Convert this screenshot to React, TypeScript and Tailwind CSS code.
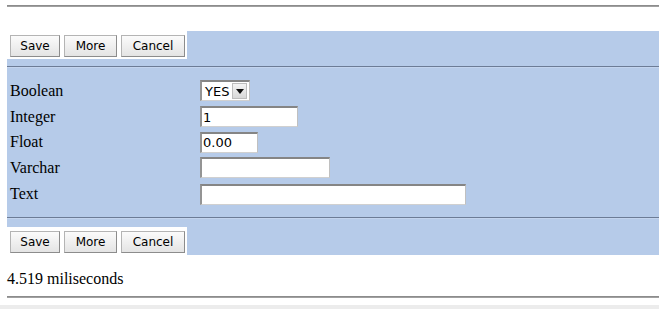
import React from "react";

function Btn({ label, w }: { label: string; w: string }) {
  return (
    <div
      className={`${w} h-[22px] flex items-center justify-center bg-gradient-to-b from-[#fbfbfb] to-[#e4e4e4] border border-[#b4b4b4] border-r-[#8c8c8c] border-b-[#8c8c8c] text-[12px] text-black leading-none`}
      style={{ fontFamily: '"DejaVu Sans", sans-serif' }}
    >
      {label}
    </div>
  );
}

function ButtonBar() {
  return (
    <div className="w-[180px] h-[28px] bg-white flex items-start gap-[4px] pl-[3px] pt-[4px]">
      <Btn label="Save" w="w-[50px]" />
      <Btn label="More" w="w-[53px]" />
      <Btn label="Cancel" w="w-[64px]" />
    </div>
  );
}

function Field({ w, value }: { w: string; value?: string }) {
  return (
    <div
      className={`${w} h-[21px] bg-white border-t-2 border-l-2 border-r border-b border-t-[#858585] border-l-[#949494] border-r-[#c0c0c0] border-b-[#d0d0d0] flex items-center pl-[1px] text-[13px] text-black leading-none`}
      style={{ fontFamily: '"DejaVu Sans", sans-serif' }}
    >
      {value}
    </div>
  );
}

function Row({ label, h, children }: { label: string; h: string; children: React.ReactNode }) {
  return (
    <div className={`${h} flex items-center`}>
      <div className="w-[193px] pl-[3px] text-[16px] leading-none text-black">{label}</div>
      {children}
    </div>
  );
}

export default function App() {
  return (
    <div
      className="w-[659px] h-[309px] overflow-hidden bg-white flex flex-col"
      style={{ fontFamily: '"Liberation Serif", serif' }}
    >
      <div className="mt-[5px] ml-[7px] h-[2px] bg-[#a0a0a0] border-t border-[#8c8c8c]" />
      <div className="mt-[24px] ml-[7px] bg-[#b6cbe9] flex flex-col">
        <div className="h-[35px] flex items-start">
          <ButtonBar />
        </div>
        <div className="h-[2px] border-t border-[#6c7c96] bg-[#c3d4ee]" />
        <div className="pt-[10px] pb-[9px] flex flex-col">
          <Row label="Boolean" h="h-[26px]">
            <div
              className="w-[50px] h-[21px] bg-white border-t-2 border-l-2 border-r border-b border-t-[#858585] border-l-[#949494] border-r-[#c0c0c0] border-b-[#d0d0d0] flex items-center text-[13px] leading-none text-black"
              style={{ fontFamily: '"DejaVu Sans", sans-serif' }}
            >
              <span className="pl-[3px] flex-1">YES</span>
              <div className="w-[15px] h-[16px] mr-[2px] bg-gradient-to-b from-[#f4f4f4] to-[#d8d8d8] border border-[#bdbdbd] flex items-center justify-center">
                <svg width="8" height="5" viewBox="0 0 8 5">
                  <path d="M0 0 L8 0 L4 5 Z" fill="#111" />
                </svg>
              </div>
            </div>
          </Row>
          <Row label="Integer" h="h-[26px]">
            <Field w="w-[98px]" value="1" />
          </Row>
          <Row label="Float" h="h-[25px]">
            <Field w="w-[58px]" value="0.00" />
          </Row>
          <Row label="Varchar" h="h-[26px]">
            <Field w="w-[130px]" />
          </Row>
          <Row label="Text" h="h-[27px]">
            <Field w="w-[266px]" />
          </Row>
        </div>
        <div className="h-[2px] border-t border-[#6c7c96] bg-[#c3d4ee]" />
        <div className="pt-[8px] flex">
          <ButtonBar />
        </div>
      </div>
      <div className="mt-[15px] ml-[7px] h-[18px] flex items-center text-[16px] leading-none text-black">
        4.519 miliseconds
      </div>
      <div className="mt-[9px] ml-[7px] h-[2px] bg-[#a0a0a0] border-t border-[#8c8c8c]" />
      <div className="mt-[7px] h-[4px] bg-[#ececec]" />
    </div>
  );
}
